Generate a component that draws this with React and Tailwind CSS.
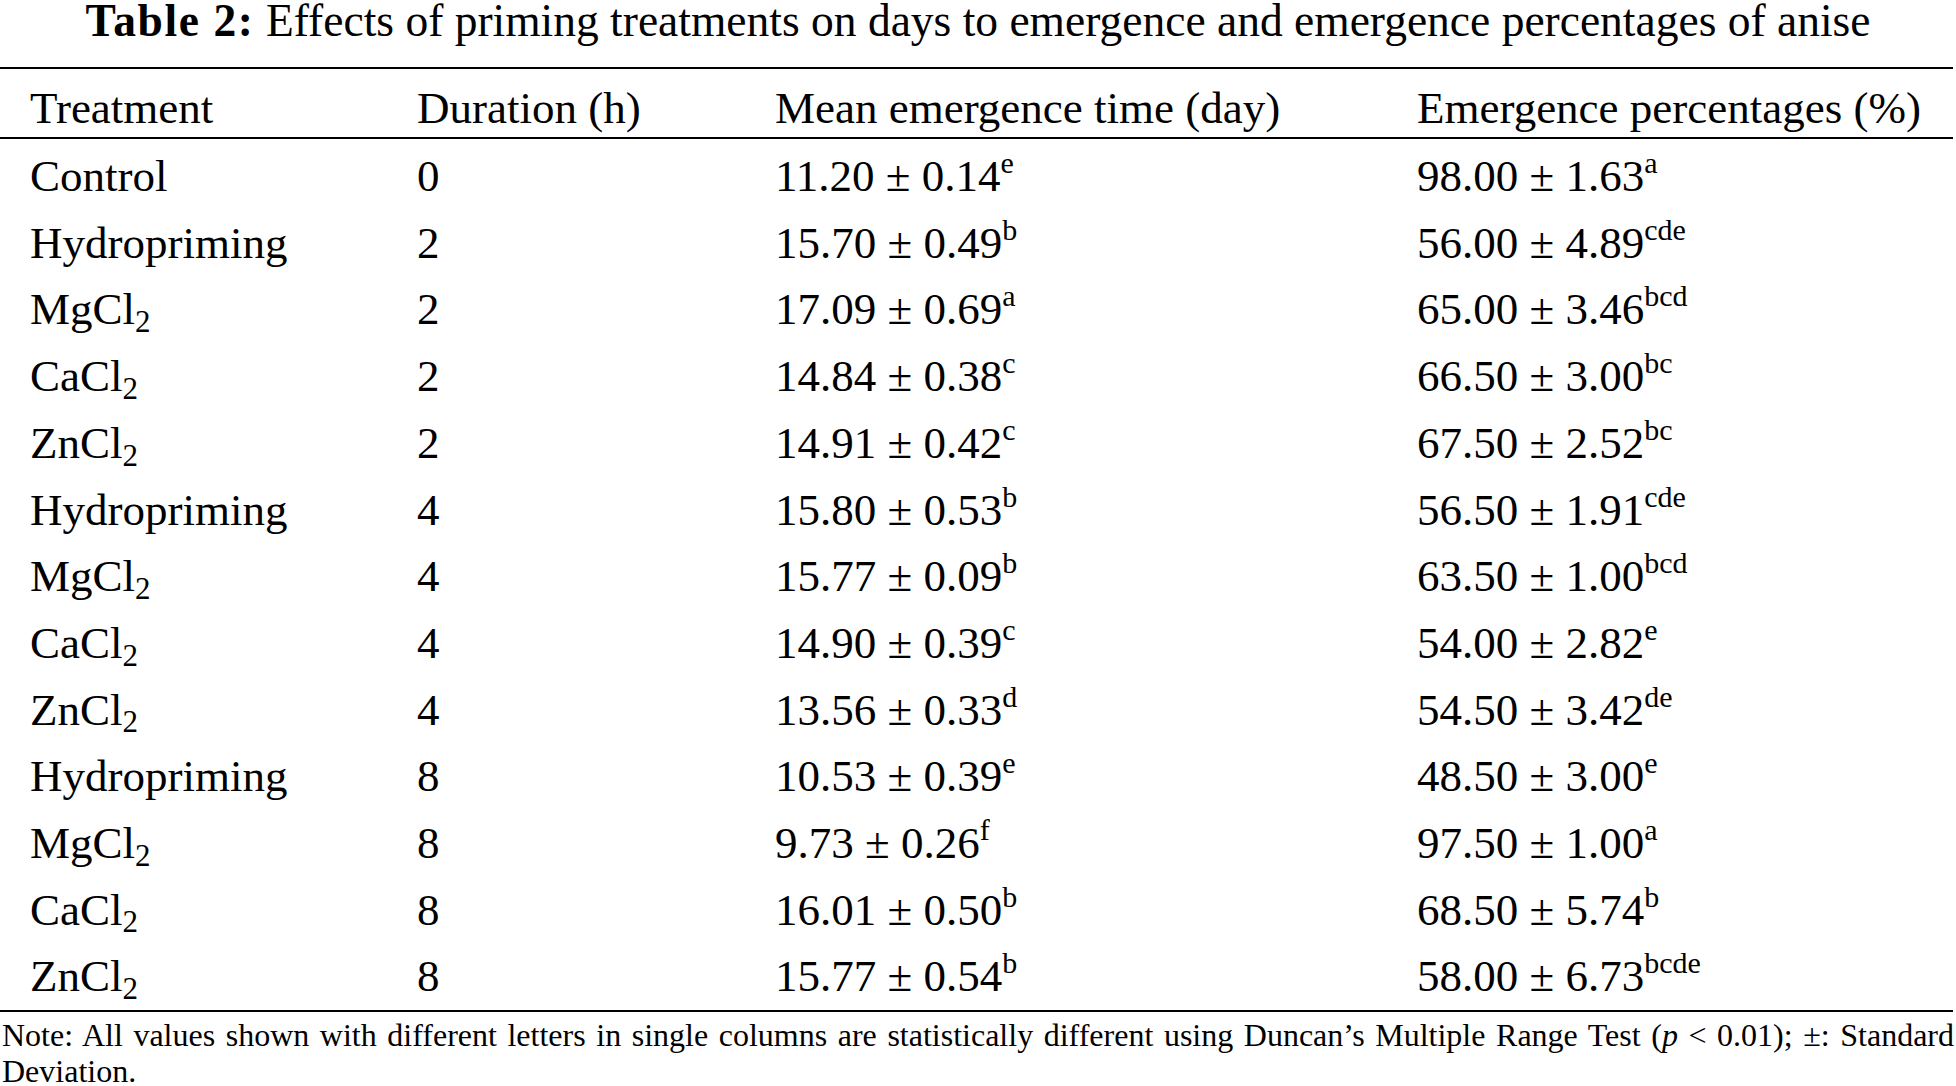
const rows = [
  ['Control', '', '0', '11.20 ± 0.14', 'e', '98.00 ± 1.63', 'a'],
  ['Hydropriming', '', '2', '15.70 ± 0.49', 'b', '56.00 ± 4.89', 'cde'],
  ['MgCl', '2', '2', '17.09 ± 0.69', 'a', '65.00 ± 3.46', 'bcd'],
  ['CaCl', '2', '2', '14.84 ± 0.38', 'c', '66.50 ± 3.00', 'bc'],
  ['ZnCl', '2', '2', '14.91 ± 0.42', 'c', '67.50 ± 2.52', 'bc'],
  ['Hydropriming', '', '4', '15.80 ± 0.53', 'b', '56.50 ± 1.91', 'cde'],
  ['MgCl', '2', '4', '15.77 ± 0.09', 'b', '63.50 ± 1.00', 'bcd'],
  ['CaCl', '2', '4', '14.90 ± 0.39', 'c', '54.00 ± 2.82', 'e'],
  ['ZnCl', '2', '4', '13.56 ± 0.33', 'd', '54.50 ± 3.42', 'de'],
  ['Hydropriming', '', '8', '10.53 ± 0.39', 'e', '48.50 ± 3.00', 'e'],
  ['MgCl', '2', '8', '9.73 ± 0.26', 'f', '97.50 ± 1.00', 'a'],
  ['CaCl', '2', '8', '16.01 ± 0.50', 'b', '68.50 ± 5.74', 'b'],
  ['ZnCl', '2', '8', '15.77 ± 0.54', 'b', '58.00 ± 6.73', 'bcde'],
];

const cols = 'grid grid-cols-[387px_358px_642px_1fr] pl-[30px]';

function Sup({ children }) {
  return <sup className="text-[30px] -top-[18px]">{children}</sup>;
}

export default function App() {
  return (
    <div className="w-[1956px] h-[1086px] bg-white text-black font-['Liberation_Serif','Times_New_Roman',serif] overflow-hidden">
      <h1 className="pt-[2px] text-center text-[45.5px] leading-[38px] whitespace-nowrap">
        <b className="tracking-[1.6px]">Table 2:</b> Effects of priming treatments on days to emergence and emergence percentages of anise
      </h1>

      <div className="w-[1953px] mt-[27px] border-t-2 border-b-2 border-black text-[45px]">
        <div className={`${cols} pt-[10px] leading-[58px] border-b-2 border-black whitespace-nowrap`}>
          <div>Treatment</div>
          <div>Duration (h)</div>
          <div>Mean emergence time (day)</div>
          <div>Emergence percentages (%)</div>
        </div>

        <div className="pt-[4px]">
          {rows.map((r, i) => (
            <div key={i} className={`${cols} leading-[66.7px] whitespace-nowrap`}>
              <div>
                {r[0]}
                {r[1] && <sub className="text-[31px]">{r[1]}</sub>}
              </div>
              <div>{r[2]}</div>
              <div>
                {r[3]}
                <Sup>{r[4]}</Sup>
              </div>
              <div>
                {r[5]}
                <Sup>{r[6]}</Sup>
              </div>
            </div>
          ))}
        </div>
      </div>

      <p className="mt-[5px] px-[2px] w-[1956px] text-[32px] leading-[36px] text-justify">
        Note: All values shown with different letters in single columns are statistically different using Duncan’s Multiple Range Test (<i>p</i> &lt; 0.01); ±: Standard Deviation.
      </p>
    </div>
  );
}
